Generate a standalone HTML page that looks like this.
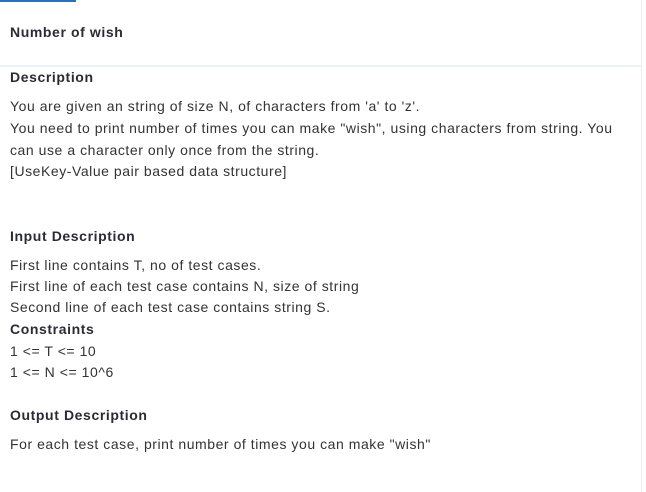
<!DOCTYPE html>
<html><head><meta charset="utf-8"><style>
body{margin:0;width:646px;height:492px;background:#fff;position:relative;overflow:hidden;font-family:"Liberation Sans",sans-serif;color:#333}
.t{position:absolute;left:10px;white-space:nowrap;font-size:14px;letter-spacing:0.55px;line-height:16px}
.h{position:absolute;left:10px;white-space:nowrap;font-size:14px;letter-spacing:0.6px;font-weight:bold;color:#2b2b35;line-height:16px}
</style></head><body>
<div style="position:absolute;left:0;top:0;width:76px;height:2px;background:#2d6fb8"></div>
<div style="position:absolute;left:641px;top:0;width:1px;height:492px;background:#eceef1"></div>
<div style="position:absolute;left:0;top:65px;width:641px;height:2px;background:#edf1f5"></div>
<div class="h" style="top:24px">Number of wish</div>
<div class="h" style="top:69px">Description</div>
<div class="t" style="top:98px">You are given an string of size N, of characters from 'a' to 'z'.</div>
<div class="t" style="top:120px">You need to print number of times you can make "wish", using characters from string. You</div>
<div class="t" style="top:142px">can use a character only once from the string.</div>
<div class="t" style="top:163px">[UseKey-Value pair based data structure]</div>
<div class="h" style="top:228px">Input Description</div>
<div class="t" style="top:257px">First line contains T, no of test cases.</div>
<div class="t" style="top:278px">First line of each test case contains N, size of string</div>
<div class="t" style="top:299px">Second line of each test case contains string S.</div>
<div class="h" style="top:321px">Constraints</div>
<div class="t" style="top:343px">1 &lt;= T &lt;= 10</div>
<div class="t" style="top:364px">1 &lt;= N &lt;= 10^6</div>
<div class="h" style="top:407px">Output Description</div>
<div class="t" style="top:436px">For each test case, print number of times you can make "wish"</div>
</body></html>
